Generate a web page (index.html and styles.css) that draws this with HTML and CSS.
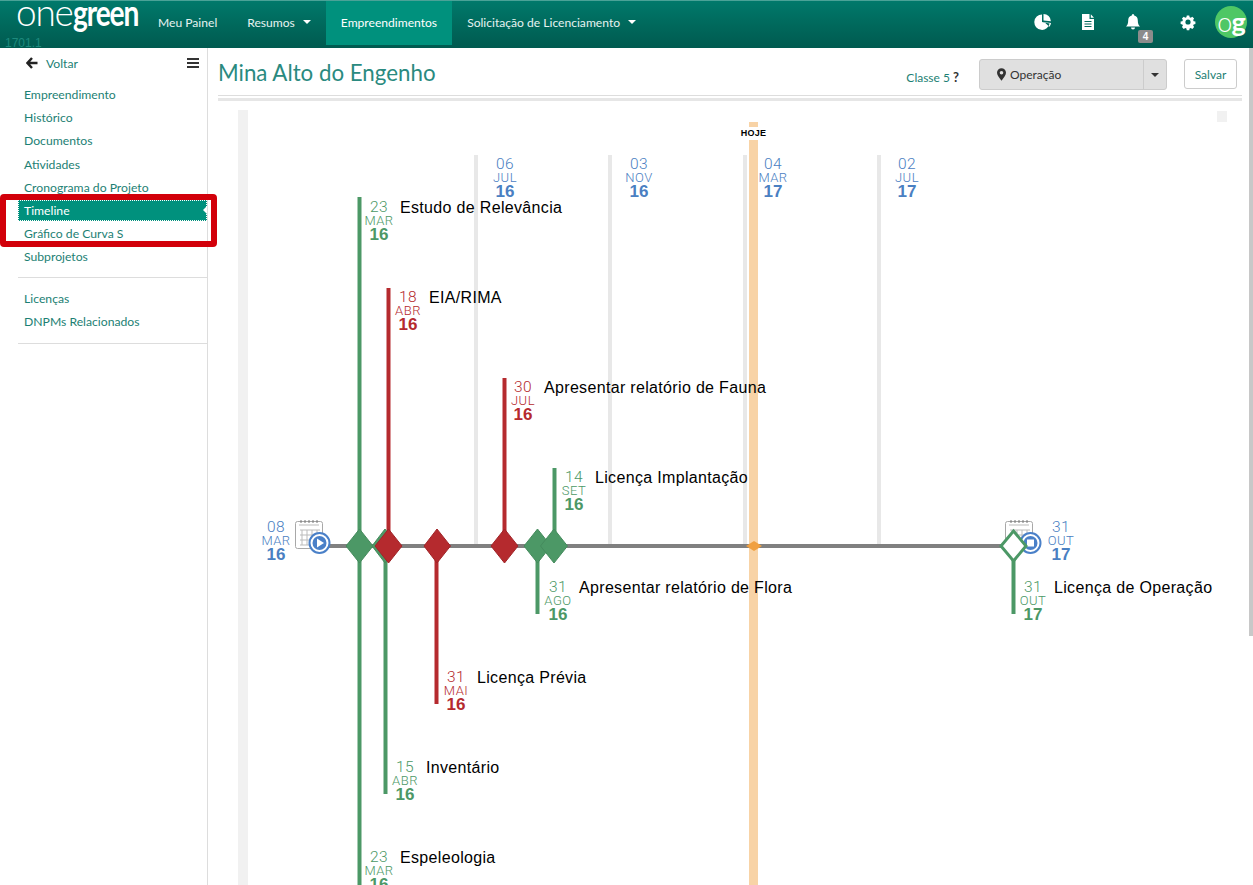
FILE: index.html
```html
<!DOCTYPE html>
<html>

<head>
    <meta charset="utf-8">
    <title>Mina Alto do Engenho</title>
    <link rel="stylesheet" href="styles.css">
</head>

<body>
    <header class="topbar">
        <a class="logo"><span class="logo-one">one</span><span class="logo-green">green</span></a>
        <span class="version">1701.1</span>
        <nav class="topnav">
            <a>Meu Painel</a>
            <a>Resumos <i class="caret"></i></a>
            <a class="active">Empreendimentos</a>
            <a>Solicitação de Licenciamento <i class="caret"></i></a>
        </nav>
        <div class="topicons">
            <svg class="ico" viewBox="0 0 18 18"><path d="M8 1.5a7.7 7.7 0 1 0 7.6 9L8 9z M9.5 1a7.5 7.5 0 0 1 7.4 7.2L9.5 7.6z M10.5 9.3l6.5.6a7.6 7.6 0 0 1-1.6 3.8z" fill="#fff"/></svg>
            <svg class="ico" viewBox="0 0 18 18"><path d="M3 1h7.5v5H15v11H3z M11.8 1.2 15 4.8h-3.2z" fill="#fff"/><path d="M5.5 8.5h7M5.5 11h7M5.5 13.5h7" stroke="#00695c" stroke-width="1"/></svg>
            <div class="bell">
                <svg class="ico" viewBox="0 0 18 18"><path d="M9 1a1.3 1.3 0 0 1 1.2 1.4c2.6.6 3.6 2.6 3.6 5 0 3 .8 4.7 2.2 6H2c1.4-1.3 2.2-3 2.2-6 0-2.4 1-4.4 3.6-5A1.3 1.3 0 0 1 9 1z M7 14.5h4a2 2 0 0 1-4 0z" fill="#fff"/></svg>
                <span class="badge">4</span>
            </div>
            <svg class="ico" viewBox="0 0 18 18"><path d="M7.6 1.5h2.8l.4 2 1.3.6 1.8-1.1 2 2-1.1 1.8.6 1.3 2 .4v2.8l-2 .4-.6 1.3 1.1 1.8-2 2-1.8-1.1-1.3.6-.4 2H7.6l-.4-2-1.3-.6-1.8 1.1-2-2L3.2 13l-.6-1.300-2-.4V8.500l2-.4.6-1.300L2.100 5l2-2 1.800 1.100 1.300-.6z" fill="#fff" transform="translate(1.100 1.100) scale(.88)"/><circle cx="9" cy="9" r="2.600" fill="#00695c"/></svg>
            <div class="avatar"><span class="av-o">o</span><span class="av-g">g</span></div>
        </div>
    </header>

    <div class="layout">
        <aside class="sidebar">
            <div class="back">
                <svg class="back-arrow" viewBox="0 0 12 12"><path d="M6 1 1.500 6 6 11M2 6h9.500" fill="none" stroke="#222" stroke-width="2.400"/></svg>
                <a>Voltar</a>
                <span class="burger"><i></i><i></i><i></i></span>
            </div>
            <ul class="menu">
                <li>Empreendimento</li>
                <li>Histórico</li>
                <li>Documentos</li>
                <li>Atividades</li>
                <li>Cronograma do Projeto</li>
                <li class="current">Timeline</li>
                <li>Gráfico de Curva S</li>
                <li>Subprojetos</li>
            </ul>
            <ul class="menu menu-second">
                <li>Licenças</li>
                <li>DNPMs Relacionados</li>
            </ul>
            <div class="highlight"></div>
        </aside>

        <main class="content">
            <div class="titlerow">
                <h1>Mina Alto do Engenho</h1>
                <a class="classe">Classe 5 <b>?</b></a>
                <div class="phase">
                    <span class="phase-label">
                        <svg class="pin" viewBox="0 0 10 14"><path d="M5 0a5 5 0 0 1 5 5c0 3-3 6-5 9-2-3-5-6-5-9a5 5 0 0 1 5-5zm0 3a2 2 0 1 0 0 4 2 2 0 0 0 0-4z" fill="#333"/></svg>
                        Operação
                    </span>
                    <span class="phase-arrow"><i class="caret dark"></i></span>
                </div>
                <button class="save">Salvar</button>
            </div>
            <div class="rule"></div>

            <svg class="chart" viewBox="218 101 1035 784" width="1035" height="784">
                <rect class="band" x="238" y="110" width="10" height="775"/>
                <rect class="band" x="1217" y="111" width="10" height="11"/>

                <!-- datas de referencia -->
                <g class="ref-lines">
                    <line x1="476" y1="155" x2="476" y2="546"/>
                    <line x1="610" y1="155" x2="610" y2="546"/>
                    <line x1="745" y1="155" x2="745" y2="546"/>
                    <line x1="879" y1="155" x2="879" y2="546"/>
                </g>
                <rect class="today" x="749" y="122" width="9" height="5"/>
                <rect class="today" x="749" y="140" width="9" height="745"/>
                <text class="hoje" x="753.500" y="136">HOJE</text>

                <line class="axis" x1="320" y1="546" x2="1013" y2="546"/>
                <polygon class="today-mark" points="754,541 762,546 754,551 746,546"/>

                <!-- inicio -->
                <g class="calendar">
                    <rect x="295.500" y="521.500" width="27" height="27" rx="2"/>
                    <path d="M299 525h20M300 530h20M300 535h20M300 540h20M300 545h20M302 530v15M307 530v15M312 530v15M317 530v15"/>
                    <path class="cal-top" d="M301 520v3M305 520v3M309 520v3M313 520v3M317 520v3"/>
                </g>
                <circle class="cal-ring" cx="319.500" cy="543" r="10"/>
                <circle class="cal-dot" cx="319.500" cy="543" r="7"/>
                <polygon class="cal-sym" points="317,538.500 324,543 317,547.500"/>

                <!-- fim -->
                <g class="calendar">
                    <rect x="1005.500" y="521.500" width="27" height="27" rx="2"/>
                    <path d="M1009 525h20M1010 530h20M1010 535h20M1010 540h20M1010 545h20M1012 530v15M1017 530v15M1022 530v15M1027 530v15"/>
                    <path class="cal-top" d="M1011 520v3M1015 520v3M1019 520v3M1023 520v3M1027 520v3"/>
                </g>
                <circle class="cal-ring" cx="1030.500" cy="543" r="10"/>
                <circle class="cal-dot" cx="1030.500" cy="543" r="7"/>
                <rect class="cal-sym" x="1027" y="539.500" width="7" height="7"/>

                <!-- hastes -->
                <line class="stem green" x1="359.500" y1="197" x2="359.500" y2="885"/>
                <line class="stem green" x1="385.500" y1="546" x2="385.500" y2="794"/>
                <line class="stem red" x1="388.500" y1="288" x2="388.500" y2="546"/>
                <line class="stem red" x1="436.500" y1="546" x2="436.500" y2="704"/>
                <line class="stem red" x1="504.500" y1="378" x2="504.500" y2="546"/>
                <line class="stem green" x1="537.500" y1="546" x2="537.500" y2="614"/>
                <line class="stem green" x1="554.500" y1="468" x2="554.500" y2="546"/>
                <line class="stem green" x1="1013.500" y1="546" x2="1013.500" y2="614"/>

                <!-- marcos -->
                <polygon class="mark green" points="359.500,529 373,546 359.500,563 346,546"/>
                <polygon class="mark green" points="385,529 398,546 385,563 372,546"/>
                <polygon class="mark red" points="388.500,529 402,546 388.500,563 375,546"/>
                <polygon class="mark red" points="437,529 450.500,546 437,563 424,546"/>
                <polygon class="mark red" points="504.500,529 518,546 504.500,563 491,546"/>
                <polygon class="mark green" points="537.500,529 551,546 537.500,563 524,546"/>
                <polygon class="mark green" points="554,529 567.500,546 554,563 540.500,546"/>
                <polygon class="mark-open" points="1013.500,531 1026,546 1013.500,561 1001,546"/>

                <!-- datas -->
                <g class="date blue">
                    <text class="d" x="505" y="169">06</text><text class="m" x="505" y="182">JUL</text><text class="y" x="505" y="197">16</text>
                    <text class="d" x="639" y="169">03</text><text class="m" x="639" y="182">NOV</text><text class="y" x="639" y="197">16</text>
                    <text class="d" x="773" y="169">04</text><text class="m" x="773" y="182">MAR</text><text class="y" x="773" y="197">17</text>
                    <text class="d" x="907" y="169">02</text><text class="m" x="907" y="182">JUL</text><text class="y" x="907" y="197">17</text>
                    <text class="d" x="276" y="532">08</text><text class="m" x="276" y="545">MAR</text><text class="y" x="276" y="560">16</text>
                    <text class="d" x="1061" y="532">31</text><text class="m" x="1061" y="545">OUT</text><text class="y" x="1061" y="560">17</text>
                </g>
                <g class="date green">
                    <text class="d" x="379" y="212">23</text><text class="m" x="379" y="225">MAR</text><text class="y" x="379" y="240">16</text>
                    <text class="d" x="574" y="482">14</text><text class="m" x="574" y="495">SET</text><text class="y" x="574" y="510">16</text>
                    <text class="d" x="558" y="592">31</text><text class="m" x="558" y="605">AGO</text><text class="y" x="558" y="620">16</text>
                    <text class="d" x="1033" y="592">31</text><text class="m" x="1033" y="605">OUT</text><text class="y" x="1033" y="620">17</text>
                    <text class="d" x="405" y="772">15</text><text class="m" x="405" y="785">ABR</text><text class="y" x="405" y="800">16</text>
                    <text class="d" x="379" y="862">23</text><text class="m" x="379" y="875">MAR</text><text class="y" x="379" y="890">16</text>
                </g>
                <g class="date red">
                    <text class="d" x="408" y="302">18</text><text class="m" x="408" y="315">ABR</text><text class="y" x="408" y="330">16</text>
                    <text class="d" x="523" y="392">30</text><text class="m" x="523" y="405">JUL</text><text class="y" x="523" y="420">16</text>
                    <text class="d" x="456" y="682">31</text><text class="m" x="456" y="695">MAI</text><text class="y" x="456" y="710">16</text>
                </g>

                <!-- nomes -->
                <g class="names">
                    <text x="400" y="213">Estudo de Relevância</text>
                    <text x="429" y="303">EIA/RIMA</text>
                    <text x="544" y="393">Apresentar relatório de Fauna</text>
                    <text x="595" y="483">Licença Implantação</text>
                    <text x="579" y="593">Apresentar relatório de Flora</text>
                    <text x="1054" y="593">Licença de Operação</text>
                    <text x="477" y="683">Licença Prévia</text>
                    <text x="426" y="773">Inventário</text>
                    <text x="400" y="863">Espeleologia</text>
                </g>
            </svg>
        </main>
        <div class="scrollbar"></div>
    </div>
</body>

</html>
```

FILE: styles.css
```css
* {
    margin: 0;
    padding: 0;
    box-sizing: border-box;
}

html,
body {
    height: 100%;
    overflow: hidden;
}

body {
    font-family: "Lato", "Open Sans", sans-serif;
    font-size: 12.200px;
    color: #333;
    background-color: #fff;
}

ul {
    list-style: none;
}

/* barra do topo */
.topbar {
    position: relative;
    display: flex;
    height: 48px;
    background: linear-gradient(#00796b, #00695c 50%, #005a50);
    border-top: 1px solid #4aa297;
    padding-left: 16px;
}

.logo {
    width: 127px;
    font-size: 37px;
    line-height: 22px;
    color: #fff;
    white-space: nowrap;
}

.logo-one {
    font-weight: 300;
    letter-spacing: -1.200px;
}

.logo-green {
    display: inline-block;
    font-weight: 700;
    letter-spacing: -1.500px;
    transform: scaleX(.76);
    transform-origin: left;
}

.version {
    position: absolute;
    left: 5px;
    top: 35px;
    font-family: "Liberation Sans", sans-serif;
    font-size: 12px;
    color: #1d8a7d;
}

.topnav {
    display: flex;
    height: 44px;
    font-size: 12.100px;
}

.topnav a {
    display: flex;
    align-items: center;
    gap: 8px;
    padding: 0 15px 2px;
    color: #e6f3f1;
}

.topnav a.active {
    background-color: #00917d;
    color: #fff;
}

.caret {
    display: inline-block;
    width: 0;
    height: 0;
    border-left: 4px solid transparent;
    border-right: 4px solid transparent;
    border-top: 4px solid #fff;
}

.caret.dark {
    border-top-color: #333;
}

.topicons {
    display: flex;
    align-items: flex-start;
    margin-left: auto;
    padding-top: 5px;
    padding-right: 6px;
    gap: 27px;
}

.ico {
    display: block;
    width: 18px;
    height: 18px;
    margin-top: 7px;
}

.bell {
    position: relative;
    margin-right: 10px;
}

.badge {
    position: absolute;
    left: 14px;
    top: 24px;
    width: 15px;
    height: 13px;
    border-radius: 2px;
    background-color: #8c8c8c;
    color: #fff;
    font-family: "Liberation Sans", sans-serif;
    font-size: 10px;
    font-weight: 700;
    line-height: 13px;
    text-align: center;
}

.avatar {
    display: flex;
    align-items: center;
    justify-content: center;
    width: 32px;
    height: 32px;
    margin-left: -9px;
    border-radius: 50%;
    background-color: #4fc765;
    color: #fff;
    font-size: 27px;
    line-height: 24px;
    letter-spacing: -1px;
}

.av-o {
    font-weight: 300;
}

.av-g {
    font-weight: 700;
}

/* corpo */
.layout {
    display: flex;
    height: 837px;
}

.sidebar {
    position: relative;
    flex: none;
    width: 208px;
    padding-left: 18px;
    border-right: 1px solid #ddd;
}

.back {
    display: flex;
    align-items: center;
    height: 30px;
    padding: 0 8px;
}

.back-arrow {
    width: 12px;
    height: 12px;
    margin-right: 8px;
}

.back a {
    color: #1d7f74;
}

.burger {
    display: flex;
    flex-direction: column;
    gap: 2px;
    margin-left: auto;
}

.burger i {
    display: block;
    width: 12px;
    height: 2px;
    background-color: #333;
}

.menu {
    padding-top: 5px;
    padding-bottom: 8px;
    border-bottom: 1px solid #ddd;
}

.menu li {
    position: relative;
    height: 23.200px;
    padding-left: 6px;
    line-height: 23.200px;
    color: #1d7f74;
}

.menu li.current {
    height: 21px;
    margin-top: 1px;
    margin-bottom: 1.200px;
    line-height: 21px;
    background-color: #00917d;
    color: #fff;
    outline: 1px dotted #fff;
    outline-offset: -1px;
}

.menu li.current::after {
    content: "";
    position: absolute;
    right: 0;
    top: 6px;
    border-top: 4px solid transparent;
    border-bottom: 4px solid transparent;
    border-right: 4px solid #fff;
}

.menu-second {
    padding-top: 9px;
    padding-bottom: 10px;
}

.menu-second li {
    height: 23px;
    line-height: 23px;
}

/* caixa vermelha por cima do menu */
.highlight {
    position: absolute;
    left: 0;
    top: 146px;
    width: 217px;
    height: 53px;
    border: 6px solid #d2000a;
    border-radius: 4px;
}

.content {
    flex: 1;
    min-width: 0;
    padding: 0 11px 0 10px;
}

.titlerow {
    display: flex;
    align-items: flex-start;
    height: 47px;
    padding-top: 10px;
}

.titlerow h1 {
    font-size: 22.300px;
    font-weight: 400;
    line-height: 29px;
    color: #2a8a80;
}

.classe {
    margin-left: auto;
    margin-top: 11px;
    margin-right: 20px;
    font-size: 12px;
    color: #1d7f74;
}

.classe b {
    font-size: 13px;
    color: #333;
}

.phase {
    display: flex;
    width: 188px;
    height: 31px;
    margin-top: 1px;
    background-color: #e0e0e0;
    border: 1px solid #ccc;
    border-radius: 3px;
    font-size: 12px;
}

.phase-label {
    display: flex;
    align-items: center;
    flex: 1;
    gap: 4px;
    padding-left: 17px;
}

.pin {
    width: 9px;
    height: 13px;
}

.phase-arrow {
    display: flex;
    align-items: center;
    justify-content: center;
    width: 23px;
    border-left: 1px solid #ccc;
}

.save {
    width: 53px;
    height: 30px;
    margin-top: 1px;
    margin-left: 17px;
    margin-right: 5px;
    background-color: #fff;
    border: 1px solid #ccc;
    border-radius: 3px;
    font-family: inherit;
    font-size: 12px;
    color: #1d7f74;
}

.rule {
    height: 6px;
    border-top: 1px solid #ddd;
    border-bottom: 3px solid #e6e6e6;
}

.chart {
    display: block;
    overflow: hidden;
}

.scrollbar {
    position: absolute;
    right: 0;
    top: 48px;
    width: 4px;
    height: 588px;
    background-color: #c8c8c8;
}

/* timeline */
.band {
    fill: #f1f1f1;
}

.ref-lines line {
    stroke: #e8e8e8;
    stroke-width: 4;
}

.today {
    fill: #f8d3a6;
}

.hoje {
    font-family: "Liberation Sans", sans-serif;
    font-size: 9px;
    font-weight: 700;
    letter-spacing: .300px;
    text-anchor: middle;
    fill: #000;
}

.axis {
    stroke: #808080;
    stroke-width: 4;
}

.today-mark {
    fill: #f0a040;
}

.calendar rect {
    fill: #fff;
    stroke: #a8a8a8;
    stroke-width: 1;
}

.calendar path {
    fill: none;
    stroke: #bbb;
    stroke-width: 1;
}

.calendar .cal-top {
    stroke: #777;
}

.cal-ring {
    fill: #fff;
    stroke: #4a80c8;
    stroke-width: 2;
}

.cal-dot {
    fill: #4a80c8;
}

.cal-sym {
    fill: #fff;
}

.stem {
    stroke-width: 4;
}

.stem.green {
    stroke: #4c9866;
}

.stem.red {
    stroke: #b52a2e;
}

.mark {
    stroke-width: 1;
}

.mark.green {
    fill: #4c9866;
    stroke: #458b5d;
}

.mark.red {
    fill: #b52a2e;
    stroke: #a02428;
}

.mark-open {
    fill: #fff;
    stroke: #4c9866;
    stroke-width: 3;
}

.date text {
    font-family: "Roboto", "Liberation Sans", sans-serif;
    text-anchor: middle;
}

.date .d {
    font-size: 15.500px;
    font-weight: 300;
    letter-spacing: .500px;
}

.date .m {
    font-size: 13px;
    font-weight: 300;
    letter-spacing: .500px;
}

.date .y {
    font-family: "Liberation Sans", sans-serif;
    font-size: 17px;
    font-weight: 700;
}

.date.blue text {
    fill: #4a80c2;
}

.date.green text {
    fill: #4c9866;
}

.date.red text {
    fill: #b52a2e;
}

.names text {
    font-family: "Liberation Sans", sans-serif;
    font-size: 16px;
    letter-spacing: .330px;
    fill: #000;
}
```
